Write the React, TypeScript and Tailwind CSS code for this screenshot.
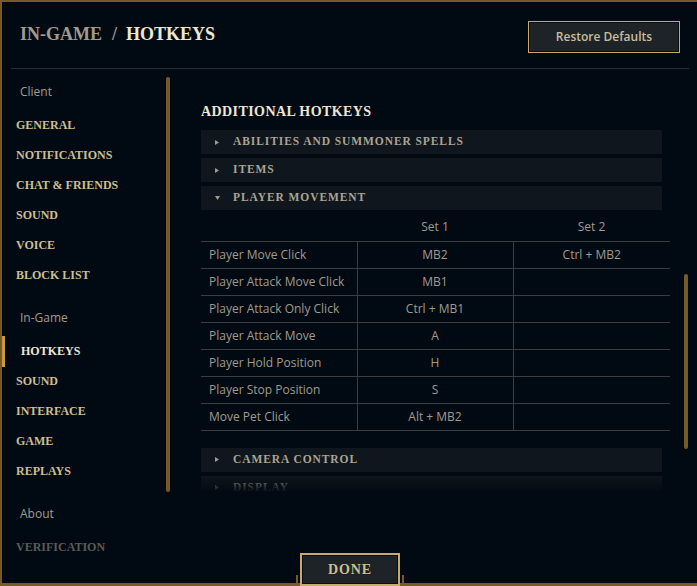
import React from 'react'

/**
 * Settings – In-Game / Hotkeys panel
 */

const serif = { fontFamily: '"Liberation Serif", "DejaVu Serif", serif' }
const sans = { fontFamily: '"Open Sans", "Liberation Sans", sans-serif' }

type NavItem = { label: string; active?: boolean; disabled?: boolean }
type NavGroup = { title: string; items: NavItem[] }

const groups: NavGroup[] = [
  {
    title: 'Client',
    items: [
      { label: 'GENERAL' },
      { label: 'NOTIFICATIONS' },
      { label: 'CHAT & FRIENDS' },
      { label: 'SOUND' },
      { label: 'VOICE' },
      { label: 'BLOCK LIST' },
    ],
  },
  {
    title: 'In-Game',
    items: [
      { label: 'HOTKEYS', active: true },
      { label: 'SOUND' },
      { label: 'INTERFACE' },
      { label: 'GAME' },
      { label: 'REPLAYS' },
    ],
  },
  { title: 'About', items: [{ label: 'VERIFICATION', disabled: true }] },
]

const rows: [string, string, string][] = [
  ['Player Move Click', 'MB2', 'Ctrl + MB2'],
  ['Player Attack Move Click', 'MB1', ''],
  ['Player Attack Only Click', 'Ctrl + MB1', ''],
  ['Player Attack Move', 'A', ''],
  ['Player Hold Position', 'H', ''],
  ['Player Stop Position', 'S', ''],
  ['Move Pet Click', 'Alt + MB2', ''],
]

const Section: React.FC<{ label: string; open?: boolean }> = ({ label, open }) => (
  <div className="h-[24px] w-[461px] bg-[#10161d] flex items-center">
    <span className="w-[32px] flex justify-center text-[#a09b8c]">
      {open ? (
        <svg width="5" height="4" viewBox="0 0 5 4">
          <path d="M0 0h5L2.5 4z" fill="currentColor" />
        </svg>
      ) : (
        <svg width="4" height="5" viewBox="0 0 4 5">
          <path d="M0 0v5l4-2.5z" fill="currentColor" />
        </svg>
      )}
    </span>
    <span
      style={serif}
      className="text-[11.5px] font-bold tracking-[0.08em] text-[#aaa494] leading-none"
    >
      {label}
    </span>
  </div>
)

export default function App() {
  return (
    <div className="relative w-[697px] h-[586px] overflow-hidden bg-[#010a13] border-t-2 border-l-2 border-[#785a28]">
      {/* Header */}
      <div className="h-[66px] flex items-start justify-between">
        <h1
          style={serif}
          className="mt-[20px] ml-[18px] text-[18px] font-bold leading-[24px] flex"
        >
          <span className="text-[#a09b8c]">IN-GAME</span>
          <span className="text-[#a09b8c] ml-[10px] mr-[9px]">/</span>
          <span className="text-[#f0e6d2]">HOTKEYS</span>
        </h1>
        <button
          style={sans}
          className="mt-[19px] mr-[17px] w-[152px] h-[32px] border border-[#c8aa6e] bg-[#1e2328] text-[12px] font-semibold text-[#c8bd9b] shadow-[inset_0_0_0_1px_#0a0e13]"
        >
          Restore Defaults
        </button>
      </div>
      <div className="ml-[9px] mr-[8px] h-px bg-[#2a2e33]" />

      <div className="flex">
        {/* Sidebar */}
        <div className="flex w-[199px]">
          <nav className="w-[164px] pt-[15px]">
            {groups.map((g, gi) => (
              <div key={g.title} className={gi > 0 ? 'mt-[20px]' : ''}>
                <div style={sans} className="pl-[18px] h-[16px] text-[12px] leading-[16px] text-[#a09b8c] mb-[10px]">
                  {g.title}
                </div>
                {g.items.map((it) => (
                  <div key={it.label} className="relative h-[30px] flex items-center">
                    {it.active && <div className="absolute left-0 top-0 w-[3px] h-[31px] bg-[#c89b3c]" />}
                    <span
                      style={serif}
                      className={`text-[12px] font-bold leading-none ${
                        it.active
                          ? 'pl-[19px] text-[#f0e6d2]'
                          : it.disabled
                            ? 'pl-[14px] text-[#5b5a56]'
                            : 'pl-[14px] text-[#cdbe91]'
                      }`}
                    >
                      {it.label}
                    </span>
                  </div>
                ))}
              </div>
            ))}
          </nav>
          <div className="mt-[8px] w-[4px] h-[415px] rounded-full bg-[#785a28]" />
        </div>

        {/* Content */}
        <div className="relative flex-1 h-[423px] overflow-hidden">
          <div className="flex">
            <div className="w-[469px]">
              <h2
                style={serif}
                className="mt-[33px] mb-[8px] text-[14px] font-bold tracking-[0.03em] leading-[20px] text-[#f0e6d2]"
              >
                ADDITIONAL HOTKEYS
              </h2>
              <div className="flex flex-col gap-[4px]">
                <Section label="ABILITIES AND SUMMONER SPELLS" />
                <Section label="ITEMS" />
                <Section label="PLAYER MOVEMENT" open />
              </div>

              <table style={sans} className="w-[469px] border-collapse text-[12px] text-[#a09b8c] table-fixed">
                <thead>
                  <tr className="h-[31px]">
                    <th className="w-[156px]" />
                    <th className="w-[156px] font-normal text-center pt-[3px]">Set 1</th>
                    <th className="font-normal text-center pt-[3px]">Set 2</th>
                  </tr>
                </thead>
                <tbody>
                  {rows.map(([name, s1, s2]) => (
                    <tr key={name} className="h-[27px] border-t border-b border-[#3c3c41]">
                      <td className="pl-[8px] border-r border-[#3c3c41]">{name}</td>
                      <td className="text-center border-r border-[#3c3c41]">{s1}</td>
                      <td className="text-center">{s2}</td>
                    </tr>
                  ))}
                </tbody>
              </table>

              <div className="mt-[17px] flex flex-col gap-[4px]">
                <Section label="CAMERA CONTROL" />
                <Section label="DISPLAY" />
              </div>
            </div>
            <div className="ml-[14px] mt-[205px] w-[4px] h-[175px] rounded-full bg-[#785a28]" />
          </div>
          <div className="absolute left-0 right-[20px] bottom-0 h-[18px] bg-linear-to-b from-[#010a13]/0 to-[#010a13]" />
        </div>
      </div>

      {/* Footer */}
      <div className="absolute left-0 right-0 bottom-0 h-[3px] bg-[#785a28]" />
      <div className="absolute left-[294px] bottom-[2px] w-[2px] h-[9px] bg-[#785a28]" />
      <div className="absolute left-[400px] bottom-[2px] w-[2px] h-[9px] bg-[#785a28]" />
      <button
        style={serif}
        className="absolute left-[298px] bottom-0 w-[100px] h-[33px] border-2 border-[#c8aa6e] bg-[#1e2328] text-[14px] font-bold tracking-[0.06em] text-[#cdbe91] shadow-[inset_0_0_0_1px_#0a0e13]"
      >
        DONE
      </button>
    </div>
  )
}
